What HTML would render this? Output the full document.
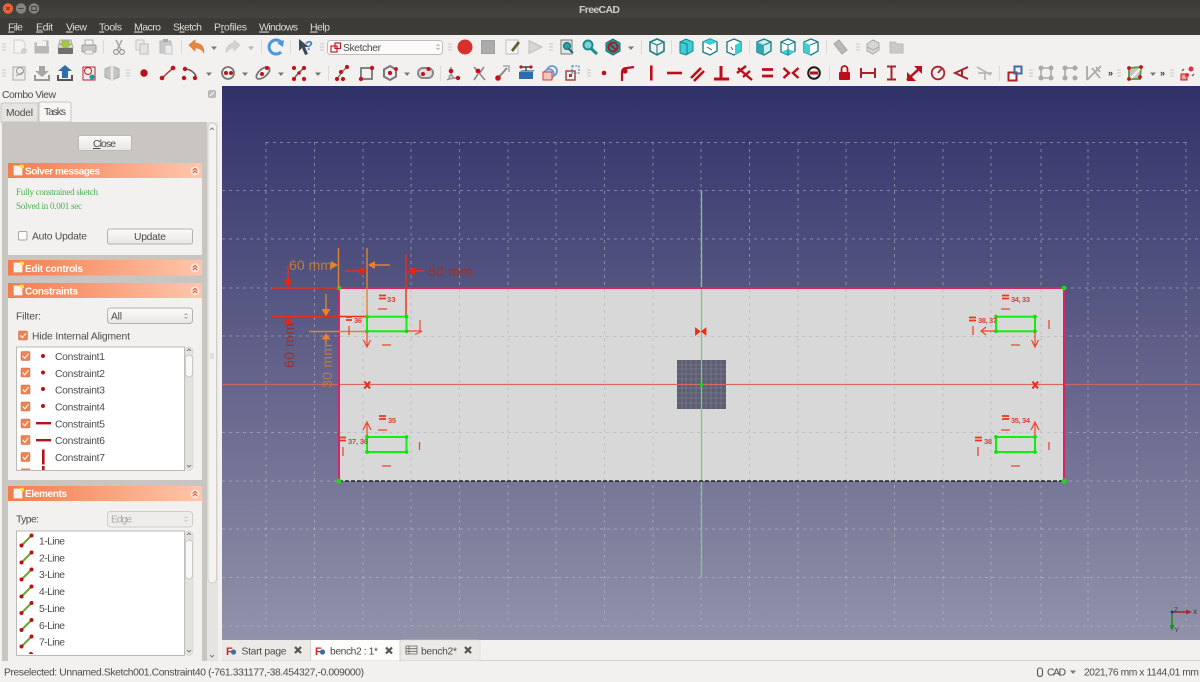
<!DOCTYPE html>
<html><head><meta charset="utf-8"><title>FreeCAD</title>
<style>
html,body{margin:0;padding:0;width:1200px;height:682px;overflow:hidden;background:#f2f1f0}
svg{display:block;font-family:"Liberation Sans",sans-serif;filter:blur(.35px)}
.m{font-size:10.5px;fill:#dfdbd2}
.t{font-size:10.3px;fill:#4c4c4c}
.h{font-size:10px;font-weight:bold;fill:#fff}
.s{font-family:"Liberation Serif",serif;font-size:9px;fill:#4caf50}
.c{font-size:7.5px;font-weight:bold;fill:#d2453a}
</style></head><body>
<svg width="1200" height="682" viewBox="0 0 1200 682" xmlns="http://www.w3.org/2000/svg">
<defs>
<linearGradient id="vp" x1="0" y1="0" x2="0" y2="1"><stop offset="0" stop-color="#31316a"/><stop offset="1" stop-color="#9292aa"/></linearGradient>
<linearGradient id="hd" x1="0" y1="0" x2="1" y2="0"><stop offset="0" stop-color="#f47c4c"/><stop offset="1" stop-color="#ffc6ac"/></linearGradient>
<linearGradient id="tb" x1="0" y1="0" x2="0" y2="1"><stop offset="0" stop-color="#3b3a36"/><stop offset="1" stop-color="#46443f"/></linearGradient>
<linearGradient id="bt" x1="0" y1="0" x2="0" y2="1"><stop offset="0" stop-color="#fbfbfa"/><stop offset="1" stop-color="#e8e6e4"/></linearGradient>
<g id="hdicon"><rect x="0" y="0" width="9" height="10" fill="#f6f4f2" stroke="#e0a080" stroke-width=".5"/><circle cx="8.5" cy="1" r="2" fill="#ffe93b"/></g>
<g id="col"><circle cx="0" cy="0" r="4.5" fill="#ffe6da"/><path d="M-2.3 -.5L0 -2.6L2.3 -.5M-2.3 2.2L0 0L2.3 2.2" fill="none" stroke="#c8503a" stroke-width="1"/></g>
<g id="chk"><rect x="0" y="0" width="9" height="9" rx="1" fill="#f08252" stroke="#c96a42" stroke-width=".5"/><path d="M1.8 4.5L3.8 6.8L7.5 2.2" fill="none" stroke="#fff" stroke-width="1.1"/></g>
<g id="el"><path d="M-4.5 5L4.5 -4" stroke="#6aa52c" stroke-width="2"/><circle cx="-5" cy="5.5" r="2" fill="#b5121b"/><circle cx="5" cy="-4.5" r="2" fill="#b5121b"/></g>
<g id="ud"><path d="M-2.5 -1.5L0 -4L2.5 -1.5M-2.5 1.5L0 4L2.5 1.5" fill="none" stroke="#666" stroke-width=".9"/></g>
<path id="dd" d="M-3 -1.5H3L0 2Z" fill="#777"/>
<g id="hdl"><path d="M0 -4v2M0 -1v2M0 2v2M2 -4v2M2 -1v2M2 2v2" stroke="#c9c7c4" stroke-width="1"/></g>
<g id="cube"><path d="M0 -8L7 -5V4L0 8L-7 4V-5Z" fill="none" stroke="#1e7f86" stroke-width="1.6"/><path d="M-7 -5L0 -2L7 -5M0 -2V8" fill="none" stroke="#1e7f86" stroke-width="1.1"/></g>
<g id="dot"><circle cx="0" cy="0" r="2" fill="#b5121b"/></g>
</defs>

<!-- title and menu bars -->
<rect width="1200" height="18" fill="url(#tb)"/>
<rect y="18" width="1200" height="17" fill="#3c3b37"/>
<circle cx="8" cy="8.5" r="5.2" fill="#e8623a"/><path d="M6.3 6.8L9.7 10.2M9.7 6.8L6.3 10.2" stroke="#7c2c14" stroke-width=".9"/>
<circle cx="21" cy="8.5" r="5.2" fill="#85837c"/><path d="M18.5 8.5H23.5" stroke="#45443f" stroke-width="1"/>
<circle cx="34" cy="8.5" r="5.2" fill="#85837c"/><rect x="31.7" y="6.5" width="4.6" height="4" fill="none" stroke="#45443f"/>
<text x="579" y="13" font-size="10.5" font-weight="bold" fill="#cfccc4" textLength="41">FreeCAD</text>
<g class="m">
<text x="8" y="30.5" textLength="15"><tspan text-decoration="underline">F</tspan>ile</text>
<text x="36" y="30.5" textLength="17"><tspan text-decoration="underline">E</tspan>dit</text>
<text x="66" y="30.5" textLength="21"><tspan text-decoration="underline">V</tspan>iew</text>
<text x="99" y="30.5" textLength="23"><tspan text-decoration="underline">T</tspan>ools</text>
<text x="134" y="30.5" textLength="27"><tspan text-decoration="underline">M</tspan>acro</text>
<text x="173" y="30.5" textLength="29">S<tspan text-decoration="underline">k</tspan>etch</text>
<text x="214" y="30.5" textLength="33">P<tspan text-decoration="underline">r</tspan>ofiles</text>
<text x="259" y="30.5" textLength="39"><tspan text-decoration="underline">W</tspan>indows</text>
<text x="310" y="30.5" textLength="20"><tspan text-decoration="underline">H</tspan>elp</text>
</g>

<!-- toolbars bg -->
<rect y="35" width="1200" height="51" fill="#f2f1f0"/>

<!-- toolbar row 1 -->
<use href="#hdl" x="3" y="47"/>
<path d="M14 40H22L25 43V53H14Z" fill="#f4f4f4" stroke="#cfcfcf"/><circle cx="24" cy="51" r="3" fill="#d0d0d0"/>
<path d="M35 43H41L43 41H48V53H35Z" fill="#c4c4c4" stroke="#b5b5b5"/><rect x="37" y="41" width="9" height="5" fill="#f0f0f0"/><rect x="35" y="46" width="14" height="7" fill="#b8b8b8"/>
<path d="M60 40H71L73 48H58Z" fill="#dedede" stroke="#aaa"/><rect x="58" y="48" width="15" height="6" rx="1" fill="#6f6f6c"/><path d="M62 41H69V44H71.5L65.5 48.5L59.5 44H62Z" fill="#a9c846" stroke="#7f9c2c" stroke-width=".5"/>
<rect x="85" y="40" width="8" height="6" fill="#f5f5f5" stroke="#aaa"/><rect x="82" y="45" width="14" height="7" rx="1" fill="#c8c8c8" stroke="#9a9a9a"/><rect x="85" y="50" width="8" height="4" fill="#eee" stroke="#aaa" stroke-width=".7"/>
<path d="M103.5 40V54" stroke="#dcdad8"/>
<path d="M116 40L121 50M122 40L117 50" stroke="#aaa" stroke-width="1.6"/><circle cx="116" cy="52" r="2.4" fill="none" stroke="#999" stroke-width="1.2"/><circle cx="122" cy="52" r="2.4" fill="none" stroke="#999" stroke-width="1.2"/>
<rect x="136" y="40" width="8" height="10" fill="#ececec" stroke="#c4c4c4"/><rect x="140" y="44" width="8" height="10" fill="#e4e4e4" stroke="#bbb"/>
<rect x="160" y="41" width="11" height="12" fill="#c9c9c9" stroke="#b8b8b8"/><rect x="163" y="39" width="5" height="3" fill="#aaa"/><rect x="165" y="45" width="7" height="9" fill="#ebebeb" stroke="#c4c4c4"/>
<path d="M181.5 40V54" stroke="#dcdad8"/>
<path d="M189 45L195 40V43C201 43 204 47 204 53C202 49 199 48 195 48V51Z" fill="#e8873f" stroke="#d2702a" stroke-width=".6"/>
<use href="#dd" x="214" y="48"/>
<path d="M240 45L234 40V43C229 43 226 47 226 53C228 49 231 48 234 48V51Z" fill="#d2d2d2" stroke="#c4c4c4" stroke-width=".6"/>
<use href="#dd" x="251" y="48" opacity=".5"/>
<path d="M261.5 40V54" stroke="#dcdad8"/>
<path d="M281 42A7 7 0 1 0 281 52" fill="none" stroke="#4c97d9" stroke-width="3"/><path d="M277 43L284 40L283 47Z" fill="#4c97d9"/>
<path d="M290.5 40V54" stroke="#dcdad8"/>
<path d="M299 39L309 47H305L308 54L305 55L302 48L299 51Z" fill="#3d4a55"/>
<text x="305" y="50" font-size="13" font-weight="bold" fill="#3f7fc0">?</text>
<use href="#hdl" x="321" y="47"/>
<rect x="327.5" y="40.5" width="115" height="14" rx="3" fill="#fafafa" stroke="#c0bdb9"/>
<rect x="331" y="46" width="6" height="6" fill="#fff" stroke="#c01e26" stroke-width="1.2"/><rect x="335" y="43" width="5.5" height="5.5" fill="none" stroke="#c01e26" stroke-width="1.2"/>
<text class="t" x="343" y="51" textLength="38">Sketcher</text>
<use href="#ud" transform="translate(438 47) scale(.6)"/>
<use href="#hdl" x="449" y="47"/>
<circle cx="465" cy="47" r="7.5" fill="#d9302c"/>
<rect x="481.5" y="40.5" width="13" height="13" fill="#ababab" stroke="#a0a0a0"/>
<rect x="506" y="40" width="12" height="14" fill="#f4f4f4" stroke="#c0c0c0"/><path d="M511 50L518 41L520 43L513 52Z" fill="#6b5a3a"/>
<path d="M529 40.5L542 47L529 53.5Z" fill="#d6d6d6" stroke="#bfbfbf"/>
<use href="#hdl" x="550" y="47"/>
<rect x="561" y="40" width="11" height="14" fill="#e2e2e2" stroke="#7a7a7a"/><circle cx="567" cy="46" r="3.5" fill="#26a0a6" stroke="#156a70"/><path d="M569 49L573 53" stroke="#156a70" stroke-width="2"/>
<circle cx="588" cy="45" r="4.5" fill="#7fd0d2" stroke="#1e8b91" stroke-width="2"/><path d="M591 48.5L597 54" stroke="#1e8b91" stroke-width="3"/>
<path d="M613 39L620 43V51L613 55L606 51V43Z" fill="#1f9aa0" stroke="#156a70"/><circle cx="613" cy="47" r="4.5" fill="none" stroke="#a81d24" stroke-width="2"/><path d="M610 44L616 50" stroke="#a81d24" stroke-width="2"/>
<use href="#dd" x="631" y="48"/>
<path d="M641.5 40V54" stroke="#dcdad8"/>
<use href="#cube" x="657" y="47"/>
<path d="M671.5 40V54" stroke="#dcdad8"/>
<path d="M680 42L686 39L693 42V51L686 55L680 53Z" fill="#3bcfd6" stroke="#1e7f86"/><path d="M680 42L687 44V54" fill="none" stroke="#1e7f86"/>
<path d="M703 42L710 39L717 42V51L710 55L703 52Z" fill="#fff" stroke="#1e7f86" stroke-width="1.4"/><path d="M703 42L710 45L717 42L710 39Z" fill="#3bcfd6"/><path d="M707 47L712 50" stroke="#555"/>
<path d="M727 42L734 39L741 42V51L734 55L727 52Z" fill="#fff" stroke="#1e7f86" stroke-width="1.4"/><path d="M735 45L741 42V51L735 55Z" fill="#3bcfd6"/><path d="M731 47L733 50" stroke="#555"/>
<path d="M749.5 40V54" stroke="#dcdad8"/>
<path d="M757 42L764 39L771 42V51L764 55L757 52Z" fill="#cdeeee" stroke="#1e7f86" stroke-width="1.4"/><path d="M757 42L764 45V55L757 52Z" fill="#2fa9af"/><path d="M764 45L771 42" stroke="#1e7f86"/>
<path d="M781 42L788 39L795 42V51L788 55L781 52Z" fill="#fff" stroke="#1e7f86" stroke-width="1.4"/><path d="M781 52L788 49L795 52L788 55Z" fill="#3bcfd6"/><path d="M781 42L788 45L795 42M788 45V55" fill="none" stroke="#1e7f86"/>
<path d="M804 42L811 39L818 42V51L811 55L804 52Z" fill="#fff" stroke="#1e7f86" stroke-width="1.4"/><path d="M804 42L810 45V55L804 52Z" fill="#3bcfd6"/><path d="M810 45L818 42" stroke="#1e7f86"/>
<path d="M826.5 40V54" stroke="#dcdad8"/>
<path d="M834 44L839 40L847 50L842 54Z" fill="#b9b9b9" stroke="#a5a5a5"/>
<use href="#hdl" x="857" y="47"/>
<path d="M867 44L873 40L879 43V50L873 54L867 51Z" fill="#d6d6d6" stroke="#aaa"/><path d="M867 47L873 50L879 47" fill="none" stroke="#aaa"/>
<path d="M890 42H895L897 44H903V53H890Z" fill="#c9c9c9" stroke="#bcbcbc"/>

<!-- toolbar row 2 -->
<use href="#hdl" x="3" y="73"/>
<rect x="13" y="67" width="12" height="13" fill="#eee" stroke="#aaa"/><circle cx="20" cy="71" r="3.5" fill="none" stroke="#999"/><path d="M16 76L23 72" stroke="#999"/>
<path d="M39 66H45V71H49L42 77L35 71H39Z" fill="#a6a6a6"/><path d="M35 75V80H49V75" fill="none" stroke="#999" stroke-width="2"/>
<path d="M62 78V71H58L65 65L72 71H68V78Z" fill="#2e6da8"/><path d="M58 75V80H72V75" fill="none" stroke="#555" stroke-width="2"/>
<rect x="83" y="67" width="12" height="13" fill="#f0f0f0" stroke="#c01e26"/><circle cx="88" cy="71" r="3.5" fill="none" stroke="#c01e26"/><circle cx="92" cy="77" r="2.5" fill="#1f9aa0"/>
<path d="M105 69L112 66L119 69V77L112 80L105 77Z" fill="#c4c4c4" stroke="#a8a8a8"/><path d="M112 66V80" stroke="#e6e6e6" stroke-width="3"/>
<use href="#hdl" x="127" y="73"/>
<circle cx="144" cy="73" r="3.7" fill="#bd0f1a"/>
<path d="M162 78L173 68" stroke="#a33" stroke-width="1.5"/><circle cx="162" cy="78" r="2.3" fill="#c2131d"/><circle cx="173" cy="68" r="2.3" fill="#c2131d"/>
<path d="M186 69Q193 70 196 76" fill="none" stroke="#555" stroke-width="1.5"/><circle cx="185" cy="69" r="2.2" fill="#c2131d"/><circle cx="184" cy="78" r="2.2" fill="#c2131d"/><circle cx="195" cy="78" r="2.2" fill="#c2131d"/>
<use href="#dd" x="209" y="74"/>
<circle cx="228" cy="73" r="6" fill="none" stroke="#777" stroke-width="1.8"/><circle cx="226" cy="73" r="2" fill="#c2131d"/><circle cx="231" cy="73" r="2" fill="#c2131d"/>
<use href="#dd" x="245" y="74"/>
<ellipse cx="263" cy="73" rx="8" ry="4" transform="rotate(-40 263 73)" fill="none" stroke="#777" stroke-width="1.8"/><circle cx="262" cy="74" r="2" fill="#c2131d"/><circle cx="267" cy="68" r="2" fill="#c2131d"/>
<use href="#dd" x="281" y="74"/>
<path d="M294 79C298 72 301 72 304 67" fill="none" stroke="#666" stroke-width="1.5"/><circle cx="294" cy="68" r="2.1" fill="#c2131d"/><circle cx="304" cy="68" r="2.1" fill="#c2131d"/><circle cx="294" cy="79" r="2.1" fill="#c2131d"/><circle cx="304" cy="79" r="2.1" fill="#c2131d"/><circle cx="299" cy="73" r="1.8" fill="#c2131d"/>
<use href="#dd" x="318" y="74"/>
<path d="M328.5 66V81" stroke="#dcdad8"/>
<path d="M337 79L342 72L347 67" fill="none" stroke="#777" stroke-width="1.3"/><circle cx="337" cy="79" r="2.1" fill="#c2131d"/><circle cx="343" cy="79" r="2.1" fill="#c2131d"/><circle cx="341" cy="72" r="2.1" fill="#c2131d"/><circle cx="347" cy="67" r="2.1" fill="#c2131d"/>
<rect x="361" y="68" width="11" height="11" fill="none" stroke="#777" stroke-width="1.8"/><circle cx="372" cy="68" r="2.2" fill="#c2131d"/><circle cx="361" cy="79" r="2.2" fill="#c2131d"/>
<path d="M390 66L396 69.5V76.5L390 80L384 76.5V69.5Z" fill="none" stroke="#777" stroke-width="2"/><circle cx="390" cy="73" r="2.2" fill="#c2131d"/><circle cx="396" cy="69" r="1.9" fill="#c2131d"/>
<use href="#dd" x="407" y="74"/>
<rect x="418" y="68" width="15" height="10" rx="5" fill="#ddd" stroke="#888" stroke-width="2"/><circle cx="423" cy="74" r="2" fill="#c2131d"/><circle cx="428.5" cy="69" r="2" fill="#c2131d"/>
<path d="M440.5 66V81" stroke="#dcdad8"/>
<path d="M451 67V78H458M451 78L447 80" fill="none" stroke="#777" stroke-width="1.2"/><circle cx="451" cy="71" r="2.3" fill="#c2131d"/><circle cx="451" cy="77" r="2" fill="#ccc" stroke="#888"/><circle cx="458" cy="78" r="2.2" fill="#c2131d"/>
<path d="M474 67L485 80M484 67L479 74M474 80L478 74" stroke="#888" stroke-width="1.6"/><circle cx="478" cy="71" r="2.4" fill="#c2131d"/>
<path d="M498 78L507 68" stroke="#888" stroke-width="2"/><path d="M503 66H509V72" fill="none" stroke="#aaa" stroke-width="1.6"/><circle cx="498" cy="78" r="2.8" fill="#c2131d"/>
<path d="M519 72H533V79H519Z" fill="#2e6da8"/><path d="M519 72L522 70H535L533 72Z" fill="#6aa0d0"/><path d="M526 67V71M521 67H531" stroke="#444" stroke-width="1.4"/><circle cx="521" cy="67" r="1.6" fill="#c2131d"/><circle cx="531" cy="67" r="1.6" fill="#c2131d"/>
<circle cx="552" cy="71" r="5" fill="none" stroke="#5b8fd0" stroke-width="1.6"/><circle cx="549" cy="74" r="5" fill="#bcd0ee" stroke="#6a96d4" stroke-width="1.4"/><rect x="543" y="72" width="9" height="8" fill="#f2c6c0" stroke="#c8463e"/>
<rect x="566" y="71" width="9" height="9" fill="#eee" stroke="#a23b3b" stroke-width="1.4"/><rect x="569" y="74" width="3" height="3" fill="#a23b3b"/><rect x="572" y="66" width="7" height="7" fill="none" stroke="#3b6ea8" stroke-dasharray="2 1.3"/>
<use href="#hdl" x="588" y="73"/>
<circle cx="604" cy="73" r="2.3" fill="#bd0f1a"/>
<path d="M622 81V73Q622 68 627 68L634 67" fill="none" stroke="#bd0f1a" stroke-width="2.2"/><circle cx="625" cy="71" r="2.6" fill="#bd0f1a"/>
<rect x="650" y="65.5" width="2.6" height="15" fill="#bd0f1a"/>
<rect x="667" y="71.7" width="15" height="2.6" fill="#bd0f1a"/>
<path d="M691 78L701 68M694 81L704 71" stroke="#bd0f1a" stroke-width="2.6"/>
<path d="M721 66V78M714 79H729" stroke="#bd0f1a" stroke-width="3"/>
<path d="M738 68L752 80" stroke="#bd0f1a" stroke-width="2.4"/><path d="M737 73L746 66M743 77L750 71" stroke="#bd0f1a" stroke-width="2.4"/>
<path d="M762 69.5H773M762 76H773" stroke="#bd0f1a" stroke-width="2.8"/>
<path d="M783.5 68L789 73L783.5 78M798.5 68L793 73L798.5 78" fill="none" stroke="#bd0f1a" stroke-width="2.4"/>
<circle cx="814" cy="73" r="5.8" fill="#f4eeee" stroke="#1a1a1a" stroke-width="2"/><path d="M810 73H818" stroke="#b5121b" stroke-width="3"/>
<path d="M829.5 66V81" stroke="#dcdad8"/>
<rect x="839" y="72" width="11" height="8" rx="1" fill="#bd0f1a"/><path d="M841.5 72V69A3 3 0 0 1 847.5 69V72" fill="none" stroke="#bd0f1a" stroke-width="1.8"/>
<path d="M861 68V78M875 68V78M861 73H875" stroke="#a8242a" stroke-width="2"/>
<path d="M887 66.5H896M887 79.5H896M891.5 67V79" stroke="#a8242a" stroke-width="2"/>
<path d="M907 80L921 67" stroke="#bd0f1a" stroke-width="2.4"/><path d="M914 66H922V74ZM907 72V81H916Z" fill="#bd0f1a"/>
<circle cx="938" cy="73" r="6.3" fill="none" stroke="#a8242a" stroke-width="1.8"/><path d="M938 73L942 68" stroke="#a8242a" stroke-width="1.8"/>
<path d="M968 67L955 73L968 79M962 70V76" fill="none" stroke="#a8242a" stroke-width="2"/>
<path d="M977 67L991 75M978 73H992M985 73L985 80" stroke="#b8b8b8" stroke-width="1.8"/>
<path d="M999.5 66V81" stroke="#dcdad8"/>
<rect x="1008.5" y="72.5" width="8" height="8" fill="#f6f6f6" stroke="#a8242a" stroke-width="2"/><rect x="1014.5" y="66.5" width="7" height="7" fill="none" stroke="#3b6ea8" stroke-width="2"/>
<use href="#hdl" x="1030" y="73"/>
<path d="M1041 68H1051V78H1041Z" fill="none" stroke="#aaa" stroke-width="1.6"/><g fill="#aaa"><circle cx="1041" cy="68" r="2.5"/><circle cx="1051" cy="68" r="2.5"/><circle cx="1041" cy="78" r="2.5"/><circle cx="1051" cy="78" r="2.5"/></g>
<path d="M1065 68H1075M1065 78V68" fill="none" stroke="#aaa" stroke-width="1.6"/><g fill="#aaa"><circle cx="1065" cy="68" r="2.5"/><circle cx="1075" cy="68" r="2.5"/><circle cx="1065" cy="78" r="2.5"/><circle cx="1075" cy="78" r="2.5"/></g>
<path d="M1087 66V80M1092 68L1100 78M1096 67L1100 72M1087 80L1101 66" stroke="#aaa" stroke-width="1.8"/>
<text x="1108" y="76" font-size="9" font-weight="bold" fill="#333">»</text>
<use href="#hdl" x="1118" y="73"/>
<path d="M1129 68L1141 67L1140 79L1129 79Z" fill="#c4c4c4" stroke="#5a9a35" stroke-width="1.8"/><path d="M1131 78L1140 69" stroke="#eee" stroke-width="2.4"/><circle cx="1129" cy="68" r="1.9" fill="#c2131d"/><circle cx="1141" cy="67" r="1.9" fill="#c2131d"/><circle cx="1129" cy="79" r="1.9" fill="#c2131d"/><circle cx="1140" cy="77" r="1.9" fill="#c2131d"/>
<use href="#dd" x="1153" y="74"/>
<text x="1160" y="76" font-size="9" font-weight="bold" fill="#333">»</text>
<use href="#hdl" x="1171" y="73"/>
<rect x="1181" y="74" width="6" height="6" fill="#f0a0a0" stroke="#c8141e"/><circle cx="1191" cy="69" r="2.5" fill="#d8343c"/><circle cx="1187" cy="75" r="2" fill="#d8343c"/><path d="M1184 69L1182 71M1192 76L1194 74" stroke="#666" stroke-width="1.4"/>

<!-- left dock -->
<rect y="86" width="222" height="575" fill="#f2f1f0"/>
<text class="t" x="2" y="98" textLength="54">Combo View</text>
<rect x="208.5" y="90.5" width="7" height="7" rx="1" fill="#bbb" stroke="#999" stroke-width=".5"/><path d="M210 96L214 92" stroke="#fff"/>
<path d="M1 122V105Q1 103 3 103H38V122Z" fill="#e6e4e1" stroke="#c9c6c2"/>
<text class="t" x="6" y="116" textLength="27">Model</text>
<path d="M39 122V104Q39 102 41 102H69Q71 102 71 104V122Z" fill="#f7f6f5" stroke="#c9c6c2"/>
<text class="t" x="44" y="115" textLength="22">Tasks</text>
<rect x="2" y="122" width="206" height="539" fill="#c9c6c2"/>
<rect x="207" y="122" width="11" height="539" fill="#e6e4e2"/>
<rect x="208" y="123" width="8.5" height="460" rx="4" fill="#f3f2f1" stroke="#c5c2be" stroke-width=".7"/>
<path d="M210 130L212 128L214 130M210 655L212 657L214 655" fill="none" stroke="#666" stroke-width=".8"/>
<path d="M210 354h4M210 356h4M210 358h4" stroke="#ccc"/>

<rect x="78.5" y="135.5" width="53" height="15" rx="2" fill="url(#bt)" stroke="#bdb9b5"/>
<text class="t" x="93" y="147" textLength="23"><tspan text-decoration="underline">C</tspan>lose</text>

<!-- Solver -->
<rect x="8" y="163" width="194" height="92" fill="#f2f1f0"/>
<rect x="8" y="163" width="194" height="15" fill="url(#hd)"/>
<use href="#hdicon" x="13.5" y="165.5"/>
<text class="h" x="25" y="174.5" textLength="75">Solver messages</text>
<use href="#col" x="195" y="171"/>
<text class="s" x="16" y="195" textLength="82">Fully constrained sketch</text>
<text class="s" x="16" y="209" textLength="66">Solved in 0.001 sec</text>
<rect x="18.5" y="231.5" width="8.5" height="8.5" rx="1.5" fill="#fff" stroke="#a8a5a1"/>
<text class="t" x="32" y="239.5" textLength="55">Auto Update</text>
<rect x="107.5" y="229" width="85" height="15" rx="2" fill="url(#bt)" stroke="#b5b1ad"/>
<text class="t" x="134" y="240" textLength="32">Update</text>

<!-- Edit controls -->
<rect x="8" y="260" width="194" height="15.5" fill="url(#hd)"/>
<use href="#hdicon" x="13.5" y="262.5"/>
<text class="h" x="25" y="272" textLength="58">Edit controls</text>
<use href="#col" x="195" y="268"/>

<!-- Constraints -->
<rect x="8" y="283" width="194" height="197" fill="#f2f1f0"/>
<rect x="8" y="283" width="194" height="15" fill="url(#hd)"/>
<use href="#hdicon" x="13.5" y="285.5"/>
<text class="h" x="25" y="294.5" textLength="53">Constraints</text>
<use href="#col" x="195" y="291"/>
<text class="t" x="16" y="319.5" textLength="25">Filter:</text>
<rect x="107.5" y="308" width="85" height="15.5" rx="3" fill="url(#bt)" stroke="#b5b1ad"/>
<text class="t" x="111" y="319.5" textLength="11">All</text>
<use href="#ud" transform="translate(186 316) scale(.6)"/>
<use href="#chk" x="18.5" y="331"/>
<text class="t" x="32" y="339.5" textLength="98">Hide Internal Aligment</text>

<rect x="16.5" y="347" width="168" height="123.5" fill="#fff" stroke="#bdb9b5"/>
<rect x="185" y="347" width="8" height="123.5" rx="4" fill="#e4e2df" stroke="#cfccc8" stroke-width=".5"/>
<rect x="185.5" y="355" width="7" height="22" rx="3.5" fill="#f8f7f6" stroke="#c0bdb9" stroke-width=".7"/>
<path d="M187 351L189 349L191 351M187 465L189 467L191 465" fill="none" stroke="#666" stroke-width=".8"/>
<use href="#chk" x="21" y="351.5"/><use href="#dot" x="43" y="356"/><text class="t" x="55" y="360" textLength="50">Constraint1</text>
<use href="#chk" x="21" y="368"/><use href="#dot" x="43" y="372.5"/><text class="t" x="55" y="377" textLength="50">Constraint2</text>
<use href="#chk" x="21" y="385"/><use href="#dot" x="43" y="389"/><text class="t" x="55" y="393.5" textLength="50">Constraint3</text>
<use href="#chk" x="21" y="402"/><use href="#dot" x="43" y="406"/><text class="t" x="55" y="410.5" textLength="50">Constraint4</text>
<use href="#chk" x="21" y="419"/><rect x="36" y="422" width="15" height="2.4" fill="#b5121b"/><text class="t" x="55" y="427.5" textLength="50">Constraint5</text>
<use href="#chk" x="21" y="435.5"/><rect x="36" y="439" width="15" height="2.4" fill="#b5121b"/><text class="t" x="55" y="444" textLength="50">Constraint6</text>
<use href="#chk" x="21" y="452.5"/><rect x="42" y="449.5" width="2.6" height="15" fill="#b5121b"/><text class="t" x="55" y="461" textLength="50">Constraint7</text>
<rect x="21" y="468.5" width="9" height="1.5" fill="#f08252"/><rect x="42" y="466" width="2.6" height="4" fill="#b5121b"/>

<!-- Elements -->
<rect x="8" y="486" width="194" height="175" fill="#f2f1f0"/>
<rect x="8" y="486" width="194" height="15" fill="url(#hd)"/>
<use href="#hdicon" x="13.5" y="488.5"/>
<text class="h" x="25" y="497" textLength="42">Elements</text>
<use href="#col" x="195" y="494"/>
<text class="t" x="16" y="522.5" textLength="23">Type:</text>
<rect x="107.5" y="511.5" width="85" height="15.5" rx="3" fill="#eeedeb" stroke="#d0cdc9"/>
<text x="111" y="522.5" font-size="10.3" fill="#aaa" textLength="21">Edge</text>
<use href="#ud" transform="translate(186 519) scale(.6)" opacity=".5"/>
<rect x="16.5" y="531" width="168" height="124.5" fill="#fff" stroke="#bdb9b5"/>
<rect x="185" y="531" width="8" height="124.5" rx="4" fill="#e4e2df" stroke="#cfccc8" stroke-width=".5"/>
<rect x="185.5" y="540" width="7" height="39" rx="3.5" fill="#f8f7f6" stroke="#c0bdb9" stroke-width=".7"/>
<path d="M187 535L189 533L191 535M187 650L189 652L191 650" fill="none" stroke="#666" stroke-width=".8"/>
<use href="#el" x="26.5" y="540"/><text class="t" x="39" y="544.5" textLength="26">1-Line</text>
<use href="#el" x="26.5" y="557"/><text class="t" x="39" y="561.5" textLength="26">2-Line</text>
<use href="#el" x="26.5" y="574"/><text class="t" x="39" y="578" textLength="26">3-Line</text>
<use href="#el" x="26.5" y="591"/><text class="t" x="39" y="595" textLength="26">4-Line</text>
<use href="#el" x="26.5" y="607.5"/><text class="t" x="39" y="612" textLength="26">5-Line</text>
<use href="#el" x="26.5" y="624.5"/><text class="t" x="39" y="629" textLength="26">6-Line</text>
<use href="#el" x="26.5" y="641"/><text class="t" x="39" y="645.5" textLength="26">7-Line</text>
<path d="M29.5 655A2 2 0 0 1 33.5 655Z" fill="#b5121b" transform="translate(-.5 -1)"/>

<!-- viewport -->
<rect x="222" y="86" width="978" height="554" fill="url(#vp)"/>
<g stroke="#c4c4cc" stroke-opacity=".5" stroke-width="1" stroke-dasharray="3 4" fill="none">
<path d="M266 142V626M314.5 142V626M363 142V626M411 142V626M459.5 142V626M508 142V626M556 142V626M604.5 142V626M653 142V626M701 142V626M749.5 142V626M798 142V626M846 142V626M894.5 142V626M943 142V626M991 142V626M1041 142V626M1088 142V626M1137 142V626M1186 142V626"/>
<path d="M266 142.5H1186M222 190.5H1200M222 239H1200M222 288H272M222 336H1200M222 432.5H1200M222 481H1200M222 529H1200M222 577.5H1200M222 626H1200M1064 288H1200"/>
</g>
<rect x="339" y="288" width="725" height="193" fill="#d8d8d8"/>
<g stroke="#c0c0c4" stroke-width="1" stroke-dasharray="3 4" fill="none">
<path d="M363 289V480M411 289V480M459.5 289V480M508 289V480M556 289V480M604.5 289V480M653 289V480M749.5 289V480M798 289V480M846 289V480M894.5 289V480M943 289V480M991 289V480M1041 289V480"/>
<path d="M340 336.5H1063M340 432.5H1063"/>
</g>
<!-- centre mesh -->
<rect x="677" y="360" width="49" height="49" fill="#5d5d73"/>
<g stroke="#7a7a8c" stroke-width=".8" fill="none">
<path d="M677 365H726M677 369H726M677 374H726M677 379H726M677 388H726M677 393H726M677 398H726M677 403H726"/>
<path d="M682 360V409M686 360V409M691 360V409M696 360V409M706 360V409M711 360V409M716 360V409M721 360V409"/>
</g>
<!-- axes -->
<path d="M222 384.5H339" stroke="#c86464" stroke-width="1.2"/><path d="M339 384.5H1064" stroke="#d86a66" stroke-width="1.2"/><path d="M1064 384.5H1200" stroke="#c86464" stroke-width="1.2"/>
<path d="M701.5 190V577" stroke="#6fd07f" stroke-width="1.3"/>
<circle cx="701.5" cy="384.5" r="2" fill="#00e000"/>
<!-- outer rect -->
<path d="M339 481V288H1064V481" fill="none" stroke="#d6246a" stroke-width="2"/>
<path d="M339 481H1064" stroke="#222" stroke-width="1.6" stroke-dasharray="4 2"/>
<g fill="#14e014"><circle cx="339" cy="288" r="2.3"/><circle cx="1064" cy="288" r="2.3"/><circle cx="339" cy="481" r="2.5"/><circle cx="1064" cy="481" r="2.5"/></g>

<!-- symmetry and X marks -->
<path d="M695.5 328L700 331.5L695.5 335ZM706 328L701.5 331.5L706 335Z" fill="#f02a10" stroke="#f02a10" stroke-width=".8"/>
<path d="M364.5 381.5L370 388.5M370 381.5L364.5 388.5" stroke="#e82a18" stroke-width="2"/>
<path d="M1032.5 381.5L1038 388.5M1038 381.5L1032.5 388.5" stroke="#e82a18" stroke-width="2"/>

<!-- dimensions -->
<g stroke="#de8236" stroke-width="1.4" fill="none"><path d="M338.5 248V288M367 248V316M373 265H390M309 331.5H367M326 294V310M326 339V345"/></g>
<g fill="#f08020"><path d="M338 265L331 261V269Z"/><path d="M368 265L375 261V269Z"/><path d="M326 316.5L321.5 309H330.5Z"/><path d="M326 333L321.5 339.5H330.5Z"/></g>
<g stroke="#ee2c18" stroke-width="1.4" fill="none"><path d="M406 254V316M272 288H338M272 316.5H367M345 271H362M412 271H424M288 266V280"/></g>
<g fill="#f0200c"><path d="M367 271L359 267V275Z"/><path d="M407 271L415 267V275Z"/><path d="M288 288L283.5 279H292.5Z"/><path d="M288 317L283.5 323.5H292.5Z"/></g>
<text x="289" y="270" font-size="14" fill="#bd7a42" textLength="43">60 mm</text>
<text x="428" y="276" font-size="14" fill="#9e2f28" textLength="44">80 mm</text>
<text transform="translate(294 368) rotate(-90)" font-size="14" fill="#9e2f28" textLength="45">60 mm</text>
<text transform="translate(332 388) rotate(-90)" font-size="14" fill="#bd7a42" textLength="44">30 mm</text>

<!-- small rectangles -->
<g fill="none" stroke="#10f010" stroke-width="2">
<rect x="367" y="316.7" width="39.5" height="14.6"/>
<rect x="996" y="316.7" width="39" height="14.6"/>
<rect x="367" y="437" width="39.5" height="15"/>
<rect x="996" y="437" width="39" height="15"/>
</g>
<g fill="#10e010">
<circle cx="367" cy="316.7" r="1.9"/><circle cx="406.5" cy="316.7" r="1.9"/><circle cx="367" cy="331.3" r="1.9"/><circle cx="406.5" cy="331.3" r="1.9"/>
<circle cx="996" cy="316.7" r="1.9"/><circle cx="1035" cy="316.7" r="1.9"/><circle cx="996" cy="331.3" r="1.9"/><circle cx="1035" cy="331.3" r="1.9"/>
<circle cx="367" cy="437" r="1.9"/><circle cx="406.5" cy="437" r="1.9"/><circle cx="367" cy="452" r="1.9"/><circle cx="406.5" cy="452" r="1.9"/>
<circle cx="996" cy="437" r="1.9"/><circle cx="1035" cy="437" r="1.9"/><circle cx="996" cy="452" r="1.9"/><circle cx="1035" cy="452" r="1.9"/>
</g>
<!-- constraint arrows and ticks -->
<g stroke="#f0452c" stroke-width="1.2" fill="none">
<path d="M407 331H421M420 320V330L421.5 331.5L415 334.5"/>
<path d="M367 332V347M363.5 340L367 347L370.5 340"/>
<path d="M981 331H995M986 327L981 331L986 335"/>
<path d="M1035 332V347M1031.5 340L1035 347L1038.5 340"/>
<path d="M367 436V422M363 430L367 422L371 430"/>
<path d="M1035 436V422M1031 430L1035 422L1039 430"/>
</g>
<g stroke="#f0452c" stroke-width="1.3" fill="none">
<path d="M378 309H387M382 345H391M349 326V335"/>
<path d="M1001 309H1010M1011 345H1020M973 326V335M1049 320V329"/>
<path d="M378 430H387M382 466H391M343 447V456M419.5 442V450"/>
<path d="M1001 430H1010M1011 466H1020M978 447V456M1049 442V450"/>
</g>
<g stroke="#f0341c" stroke-width="1.8" fill="none">
<path d="M379 295.5H386M379 298.5H386"/>
<path d="M346 317H352M346 320H352"/>
<path d="M1002 295.5H1009M1002 298.5H1009"/>
<path d="M969 317.5H976M969 320.5H976"/>
<path d="M379 416H386M379 419H386"/>
<path d="M340 437.5H346M340 440.5H346"/>
<path d="M1002 416H1009M1002 419H1009"/>
<path d="M975 437.5H982M975 440.5H982"/>
</g>
<text class="c" x="387" y="302" textLength="8.5">33</text>
<text class="c" x="354" y="323" textLength="8">36</text>
<text class="c" x="1011" y="302" textLength="19">34, 33</text>
<text class="c" x="978" y="323" textLength="19">38, 37</text>
<text class="c" x="388" y="423" textLength="8">35</text>
<text class="c" x="348" y="444" textLength="20">37, 36</text>
<text class="c" x="1011" y="423" textLength="19">35, 34</text>
<text class="c" x="984" y="444" textLength="8">38</text>

<!-- nav axes -->
<path d="M1172 612H1188" stroke="#a03030" stroke-width="1.6"/><path d="M1192 612L1186 609.5V614.5Z" fill="#a03030"/>
<path d="M1172 612V626" stroke="#1f8a2a" stroke-width="1.6"/><path d="M1172 631L1169.5 625H1174.5Z" fill="#1f8a2a"/>
<circle cx="1172" cy="612" r="1.4" fill="#2a2a90"/>
<text x="1174" y="612" font-size="6.5" fill="#333">Z</text>
<text x="1193" y="614" font-size="6.5" fill="#333">X</text>
<text x="1174.5" y="632" font-size="6.5" fill="#333">Y</text>

<!-- tab bar -->
<rect x="222" y="640" width="978" height="21" fill="#f2f1f0"/>
<path d="M222 660.5H1200" stroke="#d5d2ce"/>
<rect x="222" y="640" width="88" height="20.5" fill="#eceae7"/>
<rect x="400" y="640" width="80" height="20.5" rx="2" fill="#eceae7" stroke="#dcd9d5" stroke-width=".6"/>
<path d="M310.5 640V661H400V640" fill="#fdfdfc" stroke="#d5d2ce"/>
<g font-weight="bold" font-size="11"><text x="226" y="655" fill="#c22a22">F</text><text x="315" y="655" fill="#c22a22">F</text></g>
<circle cx="233.5" cy="652" r="2.6" fill="#3b6ea8"/><circle cx="322.5" cy="652" r="2.6" fill="#3b6ea8"/>
<text class="t" x="241.5" y="654.5" textLength="45">Start page</text>
<text class="t" x="330" y="654.5" textLength="48">bench2 : 1*</text>
<text class="t" x="421" y="654.5" textLength="36">bench2*</text>
<path d="M406 646H417V654H406ZM406 648.7H417M406 651.3H417M409 646V654" fill="none" stroke="#666" stroke-width=".8"/>
<g stroke="#555" stroke-width="2.2"><path d="M295 647L301 653M301 647L295 653"/><path d="M386 647.5L392 653.5M392 647.5L386 653.5"/><path d="M465 647L471 653M471 647L465 653"/></g>

<!-- status bar -->
<rect y="661" width="1200" height="21" fill="#f2f1f0"/>
<text class="t" x="4" y="675.5" textLength="360">Preselected: Unnamed.Sketch001.Constraint40 (-761.331177,-38.454327,-0.009000)</text>
<rect x="1037.5" y="668" width="5" height="8.5" rx="2.2" fill="none" stroke="#555" stroke-width="1.1"/>
<text class="t" x="1047" y="675.5" textLength="19">CAD</text>
<use href="#dd" x="1073" y="672"/>
<text class="t" x="1084" y="675.5" textLength="115">2021,76 mm x 1144,01 mm</text>
</svg>
</body></html>
